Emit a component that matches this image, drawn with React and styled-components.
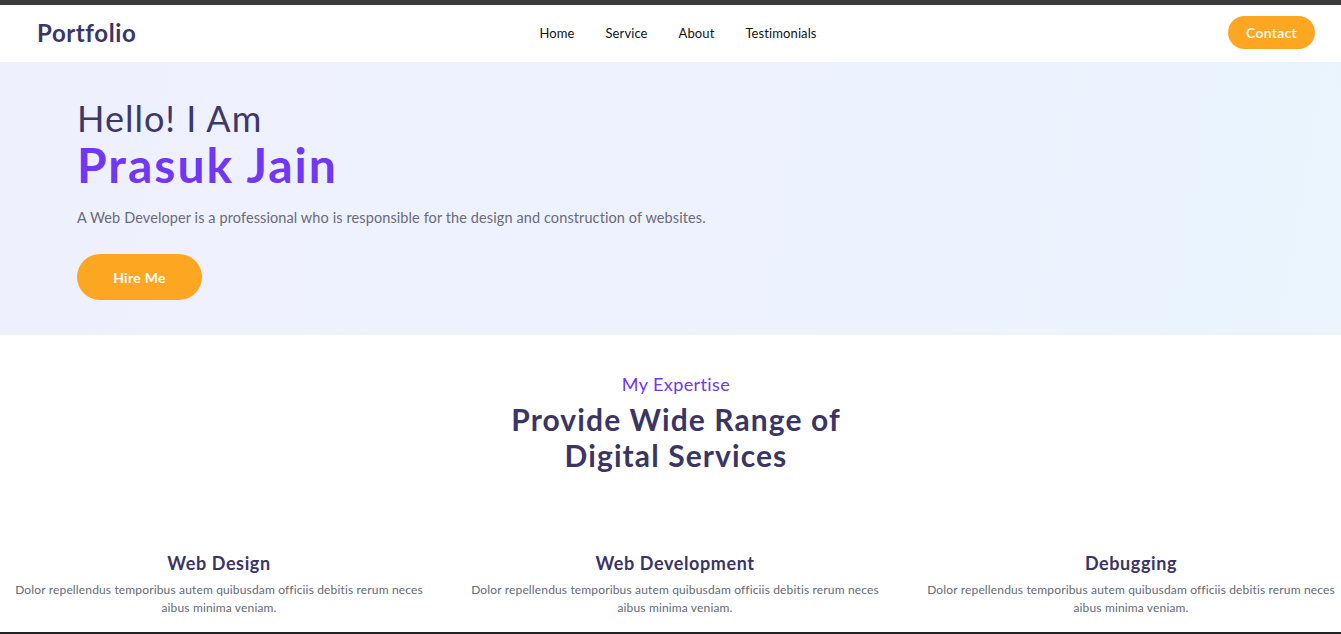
import React from 'react';
import styled, { createGlobalStyle } from 'styled-components';

const GlobalStyle = createGlobalStyle`
  * {
    box-sizing: border-box;
  }
  html, body {
    margin: 0;
    padding: 0;
    overflow: hidden;
  }
  body {
    font-family: 'Lato', 'Open Sans', sans-serif;
    background: #ffffff;
    border-top: 5px solid #3a3a3a;
  }
  body::after {
    content: '';
    position: fixed;
    left: 0;
    right: 0;
    bottom: 0;
    height: 2px;
    background: #222;
  }
`;

const services = [
  { title: 'Web Design' },
  { title: 'Web Development' },
  { title: 'Debugging' },
];

const App = () => {
  return (
    <>
      <GlobalStyle />
      <Nav>
        <Logo>Portfolio</Logo>
        <Menu>
          <MenuItem>Home</MenuItem>
          <MenuItem>Service</MenuItem>
          <MenuItem>About</MenuItem>
          <MenuItem>Testimonials</MenuItem>
        </Menu>
        <ContactBtn>Contact</ContactBtn>
      </Nav>

      <Hero>
        <Hello>Hello! I Am</Hello>
        <Name>Prasuk Jain</Name>
        <Intro>
          A Web Developer is a professional who is responsible for the design and construction of websites.
        </Intro>
        <HireBtn>Hire Me</HireBtn>
      </Hero>

      <Expertise>
        <SectionHead>
          <Kicker>My Expertise</Kicker>
          <Heading>
            Provide Wide Range of
            <br />
            Digital Services
          </Heading>
        </SectionHead>
        <Cards>
          {services.map((s) => (
            <Card key={s.title}>
              <CardTitle>{s.title}</CardTitle>
              <CardText>
                Dolor repellendus temporibus autem quibusdam officiis debitis rerum neces aibus minima veniam.
              </CardText>
            </Card>
          ))}
        </Cards>
      </Expertise>
    </>
  );
};

export default App;

const Nav = styled.nav`
  height: 57px;
  display: grid;
  grid-template-columns: 1fr auto 1fr;
  align-items: center;
  padding: 0 26px 0 37px;
  background: #fff;
`;

const Logo = styled.div`
  font-size: 24px;
  font-weight: 700;
  color: #3c3666;
  letter-spacing: 0.6px;
  margin-top: -2px;
`;

const Menu = styled.ul`
  display: flex;
  gap: 31px;
  list-style: none;
  margin: -2px 0 0 4px;
  padding: 0;
`;

const MenuItem = styled.li`
  font-size: 13px;
  color: #111;
  letter-spacing: 0.1px;
  cursor: pointer;
`;

const ContactBtn = styled.button`
  justify-self: end;
  width: 87px;
  height: 33px;
  margin-top: -2px;
  border: none;
  border-radius: 20px;
  background: #fca622;
  color: #fff;
  font-family: inherit;
  font-size: 14px;
  font-weight: 600;
  letter-spacing: 0.3px;
  cursor: pointer;
`;

const Hero = styled.section`
  height: 273px;
  padding: 34px 77px 0;
  background: linear-gradient(100deg, #eff0fe 0%, #edf2fe 55%, #eaf5fe 100%);
`;

const Hello = styled.h2`
  margin: 0;
  font-size: 36px;
  font-weight: 400;
  line-height: 44px;
  color: #3d386b;
  letter-spacing: 1px;
`;

const Name = styled.h1`
  margin: 0;
  font-size: 48px;
  font-weight: 700;
  line-height: 50px;
  color: #7037f6;
  letter-spacing: 2px;
`;

const Intro = styled.p`
  margin: 17px 0 0;
  font-size: 14.5px;
  color: #6a6a78;
  line-height: 22px;
  letter-spacing: 0.1px;
`;

const HireBtn = styled.button`
  margin-top: 25px;
  width: 125px;
  height: 46px;
  border: none;
  border-radius: 24px;
  background: #fca622;
  color: #fff;
  font-family: inherit;
  font-size: 14px;
  font-weight: 700;
  letter-spacing: 0.3px;
  cursor: pointer;
`;

const Expertise = styled.section`
  padding-top: 37px;
  text-align: center;
`;

const SectionHead = styled.header`
  padding-left: 11px;
`;

const Kicker = styled.div`
  font-size: 18px;
  color: #7037f6;
  line-height: 24px;
  letter-spacing: 0.4px;
`;

const Heading = styled.h2`
  margin: 5px 0 0;
  font-size: 30px;
  font-weight: 700;
  line-height: 36px;
  color: #3b3566;
  letter-spacing: 1.1px;
`;

const Cards = styled.div`
  display: grid;
  grid-template-columns: repeat(3, 438px);
  column-gap: 18px;
  margin-top: 78px;
`;

const Card = styled.div`
  display: flex;
  flex-direction: column;
  align-items: center;
  padding: 0 12px;
`;

const CardTitle = styled.h3`
  margin: 0;
  font-size: 18px;
  font-weight: 700;
  color: #3b3566;
  line-height: 24px;
  letter-spacing: 0.6px;
`;

const CardText = styled.p`
  margin: 6px 0 0;
  font-size: 12px;
  line-height: 18px;
  color: #666a75;
  letter-spacing: 0.15px;
`;
